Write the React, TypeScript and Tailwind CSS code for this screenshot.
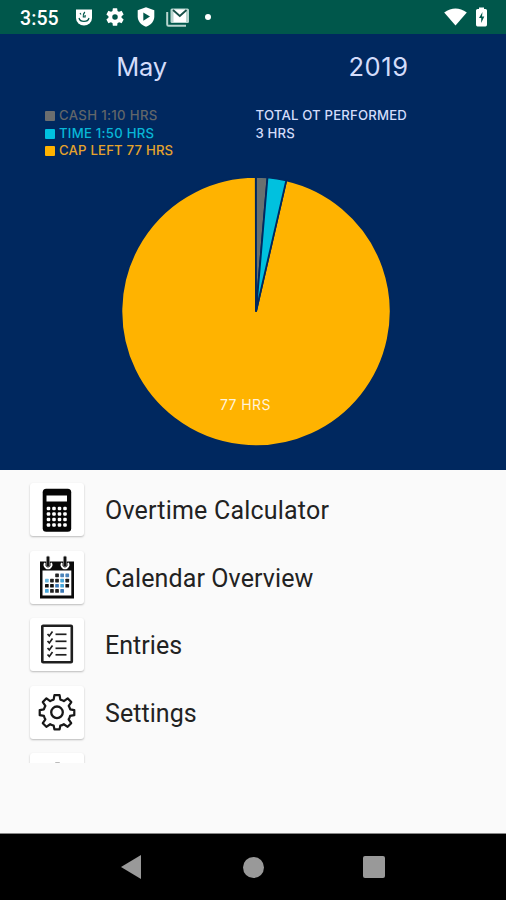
import type { ReactNode } from "react";

const CX = 134;
const CY = 134.5;
const R = 134.6;

function slicePath(start: number, end: number) {
  const point = (deg: number) => {
    const a = (deg * Math.PI) / 180;
    return `${(CX + R * Math.sin(a)).toFixed(2)} ${(CY - R * Math.cos(a)).toFixed(2)}`;
  };
  return `M${CX} ${CY}L${point(start)}A${R} ${R} 0 ${end - start > 180 ? 1 : 0} 1 ${point(end)}Z`;
}

function StatusBar() {
  return (
    <header className="flex h-[34px] shrink-0 items-center bg-[#00574b] pl-5 pr-[18px] text-white">
      <span className="w-[55px] whitespace-nowrap pt-[3px] font-['Roboto',sans-serif] text-[19.5px] font-medium leading-none tracking-[0.1px]">3:55</span>
      <svg className="h-[17px] w-[18px]" viewBox="0 0 18 17" fill="none">
        <path d="M1 0.5h16v8.5a8 7.5 0 0 1-16 0Z" fill="#fff" />
        <path d="M4 9c1 4.5 9 4.5 10 0M5 4l1 1.5M9.8 3c-1.500 1.800-2 3-1.500 5h1.800V6" stroke="#00574b" strokeWidth="1.2" />
      </svg>
      <svg className="ml-[11px] h-[22px] w-[22px]" viewBox="0 0 24 24" fill="#fff">
        <path d="M19.14 12.94c.04-.3.06-.61.06-.94s-.02-.64-.07-.94l2.03-1.58a.49.49 0 0 0 .12-.61l-1.92-3.32a.49.49 0 0 0-.59-.22l-2.39.96a7 7 0 0 0-1.62-.94l-.36-2.54a.48.48 0 0 0-.48-.41h-3.84a.47.47 0 0 0-.47.41l-.36 2.54a7.4 7.4 0 0 0-1.62.94l-2.39-.96a.48.48 0 0 0-.59.22L2.74 8.87a.48.48 0 0 0 .12.61l2.03 1.58a6 6 0 0 0 0 1.88l-2.03 1.58a.49.49 0 0 0-.12.61l1.92 3.32c.12.22.37.29.59.22l2.39-.96c.5.38 1.03.7 1.62.94l.36 2.54c.05.24.24.41.48.41h3.84c.24 0 .44-.17.47-.41l.36-2.54a7.4 7.4 0 0 0 1.62-.94l2.39.96c.22.08.47 0 .59-.22l1.92-3.32a.48.48 0 0 0-.12-.61ZM12 15a3 3 0 1 1 0-6 3 3 0 0 1 0 6Z" />
      </svg>
      <svg className="ml-[11px] h-5 w-[18px]" viewBox="0 0 18 20">
        <path d="M9 0.3 17.3 3.3v6.2c0 4.8-3.2 8.4-8.3 10.2C3.9 17.9.7 14.3.7 9.5V3.3Z" fill="#fff" />
        <path d="m6.3 5.5 6.7 4.1-6.7 4.1Z" fill="#00574b" />
      </svg>
      <svg className="ml-[11px] h-[19px] w-6" viewBox="0 0 24 19">
        <path d="M1.2 4v12.5q0 1.3 1.3 1.3H20" fill="none" stroke="#b8d5cf" strokeWidth="2" />
        <rect x="4.5" y="0.5" width="18.5" height="14.5" rx="1.5" fill="#b8d5cf" />
        <path d="M7.5 1.5h12.5v12.5H7.5Z" fill="#fff" />
        <path d="m7 2 6.8 6L20.500 2" fill="none" stroke="#174f48" strokeWidth="1.8" />
      </svg>
      <span className="ml-[15px] h-[6px] w-[6px] rounded-full bg-white" />
      <svg className="ml-auto h-[18px] w-[23px]" viewBox="0 0 23 18">
        <path d="M0.2 4.5Q11.5-3.5 22.8 4.5L11.5 17.5Z" fill="#fff" />
      </svg>
      <svg className="ml-[9px] mr-[1.5px] h-5 w-[11px]" viewBox="0 0 11 20">
        <path d="M3 0.5h5V2h1.5Q11 2 11 3.5v14Q11 19.5 9.5 19.5h-8Q0 19.5 0 17.5v-14Q0 2 1.5 2H3Z" fill="#fff" />
        <path d="M6.5 5 3 11h2.2v5L8.3 9.5H6Z" fill="#00574b" />
      </svg>
    </header>
  );
}

const legend = [
  { label: "CASH 1:10 HRS", text: "text-[#626669]", swatch: "bg-[#6b6e6f]", spacing: "tracking-[0.33px]" },
  { label: "TIME 1:50 HRS", text: "text-[#08b7d7]", swatch: "bg-[#00c1df]", spacing: "tracking-[0.23px]" },
  { label: "CAP LEFT 77 HRS", text: "text-[#e5a32c]", swatch: "bg-[#ffb300]", spacing: "tracking-[0.17px]" },
];

function Overview() {
  return (
    <section className="flex h-[436px] shrink-0 flex-col bg-[#00285f] font-['Inter',sans-serif]">
      <div className="flex h-[66px] pl-[23px] pr-[9px] text-[25.5px] leading-[66px] text-[#d3dcfa]">
        <span className="w-[237px] text-center tracking-[-0.2px]">May</span>
        <span className="w-[237px] text-center tracking-[0.6px]">2019</span>
      </div>
      <div className="flex h-[77px] pl-[44.5px] pt-[7px] text-[13.2px] font-medium leading-[17.7px]">
        <ul className="w-[211px]">
          {legend.map((item) => (
            <li key={item.label} className={`flex items-center whitespace-nowrap ${item.text} ${item.spacing}`}>
              <span className={`mr-[4.5px] h-[10px] w-[10px] rounded-[1px] ${item.swatch}`} />
              {item.label}
            </li>
          ))}
        </ul>
        <div className="whitespace-nowrap tracking-[0.17px] text-[#d3dcfa]">
          <p>TOTAL OT PERFORMED</p>
          <p>3 HRS</p>
        </div>
      </div>
      <div className="relative ml-[122px] h-[269px] w-[268px]">
        <svg className="h-[269px] w-[268px] overflow-visible" viewBox="0 0 268 269" stroke="#00285f" strokeWidth="1.8">
          <path d={slicePath(13, 359.9)} fill="#ffb300" />
          <path d={slicePath(0, 4.9)} fill="#68706f" />
          <path d={slicePath(4.9, 13)} fill="#00c1df" />
        </svg>
        <span className="absolute left-[98px] top-[219px] whitespace-nowrap text-[14px] leading-[18px] tracking-[0.4px] text-[#fff4dc]">77 HRS</span>
      </div>
    </section>
  );
}

function CalculatorIcon() {
  return (
    <svg className="h-11 w-11" viewBox="0 0 44 44">
      <rect x="7.7" y="0.7" width="28.5" height="43" rx="3.5" fill="#050505" />
      <rect x="11.5" y="7.5" width="20.5" height="6" fill="#fff" />
      {[20.5, 26, 31.5, 37].map((y) =>
        [13.5, 19, 24.5, 30].map((x) => <rect key={`${x}-${y}`} x={x - 1.8} y={y - 1.8} width="3.6" height="3.6" rx="1.2" fill="#fff" />),
      )}
    </svg>
  );
}

const days = [
  ["", "", "#222", "#4b83b9", "#4b83b9"],
  ["#6bb8df", "#222", "#222", "#48a7da", "#222"],
  ["#111", "#111", "#3c78b5", "#48a7da", "#111"],
  ["#48a7da", "#222", "#222", "#3c78b5", ""],
];

function CalendarIcon() {
  return (
    <svg className="h-11 w-11" viewBox="0 0 44 44">
      <rect x="5" y="6.5" width="34" height="37" fill="#0b0b0b" />
      <rect x="7.5" y="15.5" width="28.8" height="25" fill="#fff" />
      {[13, 30].map((x) => (
        <g key={x}>
          <path d={`M${x - 3} 8a3.5 3.5 0 1 0 6 0`} fill="#111" stroke="#fff" strokeWidth="1.8" />
          <rect x={x - 1.6} y="1" width="3.2" height="11" rx="1.6" fill="#111" stroke="#aaa" strokeWidth="0.6" />
        </g>
      ))}
      {days.flatMap((row, r) =>
        row.map((color, c) => color && <rect key={`${r}-${c}`} x={10 + c * 5.1} y={18.5 + r * 5.2} width="3.7" height="3.7" rx="0.6" fill={color} />),
      )}
    </svg>
  );
}

function EntriesIcon() {
  return (
    <svg className="h-11 w-11" viewBox="0 0 44 44" fill="none" stroke="#202020">
      <rect x="7.3" y="2.8" width="29.5" height="36.5" rx="0.8" strokeWidth="2.6" />
      {[11, 18, 25, 31.5].map((y) => (
        <g key={y}>
          <path d={`m12.5 ${y} 1.8 1.9 3.2-4.3`} strokeWidth="1.7" />
          <path d={`M20.5 ${y + 0.3}h11`} strokeWidth="1.7" />
        </g>
      ))}
    </svg>
  );
}

function SettingsIcon() {
  return (
    <svg className="h-11 w-11" viewBox="0 0 44 44" fill="none" stroke="#181818" strokeWidth="2.300" strokeLinejoin="round">
      <path transform="translate(0 -1) translate(22 23.500) scale(.96) translate(-22 -23.500)" d="M19.3 5.5h5.4l.8 4.6q2 .5 3.700 1.5l3.900-2.800 3.800 3.800-2.700 4q1 1.600 1.500 3.600l4.300.8v5.300l-4.400.8q-.5 2-1.500 3.600l2.700 3.900-3.700 3.800-4-2.700q-1.600 1-3.600 1.400l-.8 3.900h-5.400l-.8-3.900q-2-.5-3.600-1.400l-4 2.700-3.700-3.800 2.700-3.900q-1-1.600-1.500-3.600L4 26.300V21l4.400-.8q.5-2 1.500-3.600l-2.700-4L11 8.800l3.900 2.800q1.600-1 3.600-1.500Z" />
      <circle cx="22" cy="22.3" r="5.8" />
    </svg>
  );
}

const menu: { label: string; icon: ReactNode; spacing: string }[] = [
  { label: "Overtime Calculator", icon: <CalculatorIcon />, spacing: "tracking-[0.2px]" },
  { label: "Calendar Overview", icon: <CalendarIcon />, spacing: "tracking-[0.1px]" },
  { label: "Entries", icon: <EntriesIcon />, spacing: "tracking-[0.05px]" },
  { label: "Settings", icon: <SettingsIcon />, spacing: "tracking-[0.05px]" },
];

function Tile({ children }: { children?: ReactNode }) {
  return (
    <div className="flex h-[53px] w-[54px] shrink-0 items-center justify-center rounded-[3px] bg-white shadow-[0_1px_2px_rgba(0,0,0,0.26)]">
      {children}
    </div>
  );
}

export default function App() {
  return (
    <div className="flex h-[900px] w-[506px] flex-col overflow-hidden bg-[#fafafa]">
      <StatusBar />
      <Overview />
      <main className="h-[364px] shrink-0 border-b border-[#888] bg-[#fafafa]">
        <ul className="h-[293px] overflow-hidden pl-[30px] pt-[6px]">
          {menu.map((item) => (
            <li key={item.label} className="flex h-[67.5px] items-center">
              <Tile>{item.icon}</Tile>
              <span className={`ml-[21px] whitespace-nowrap pt-[3px] font-['Roboto',sans-serif] text-[25px] leading-[30px] text-[#222] ${item.spacing}`}>{item.label}</span>
            </li>
          ))}
          <li className="flex h-[67.5px] items-center">
            <Tile>
              <span className="mb-[34px] h-[2px] w-[5px] rounded-full bg-[#bbb]" />
            </Tile>
          </li>
        </ul>
      </main>
      <nav className="flex h-[66px] shrink-0 items-center bg-black pl-[121px] pr-[121px]">
        <svg className="h-6 w-5" viewBox="0 0 20 24"><path d="M0 12 20 0v24Z" fill="#999" /></svg>
        <span className="ml-[102px] h-[21px] w-[21px] rounded-full bg-[#999]" />
        <span className="ml-[99px] h-[22px] w-[22px] rounded-[2px] bg-[#999]" />
      </nav>
    </div>
  );
}
